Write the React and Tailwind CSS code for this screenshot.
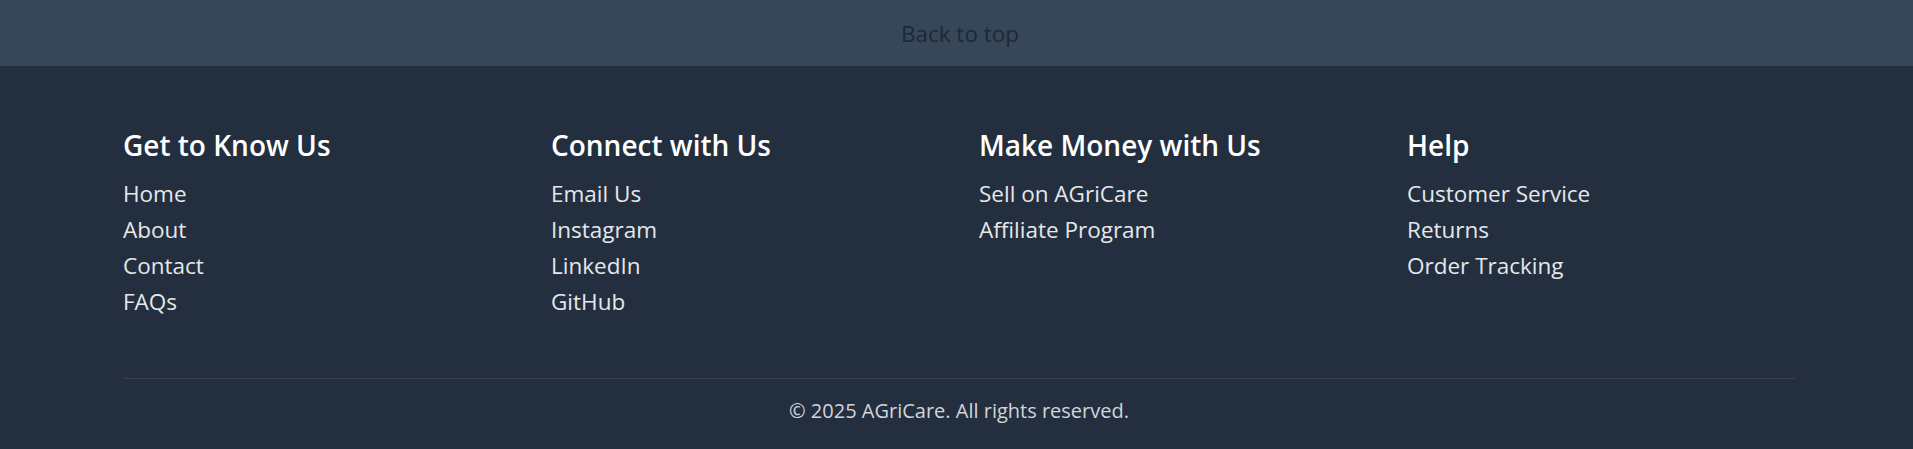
export default function App() {
  const cols = [
    { title: "Get to Know Us", links: ["Home", "About", "Contact", "FAQs"] },
    { title: "Connect with Us", links: ["Email Us", "Instagram", "LinkedIn", "GitHub"] },
    { title: "Make Money with Us", links: ["Sell on AGriCare", "Affiliate Program"] },
    { title: "Help", links: ["Customer Service", "Returns", "Order Tracking"] },
  ];
  return (
    <div className="w-full" style={{ fontFamily: '"Open Sans", "Noto Sans", sans-serif' }}>
      <div className="h-[66px] bg-[#37475a] flex items-center justify-center pl-[7px] pt-[2px]">
        <span className="text-[22.5px] leading-[36px] text-[#1f2733]">Back to top</span>
      </div>
      <footer className="bg-[#232f3e] pl-[123px] pr-[118px] pt-[61px] pb-[23px]">
        <div className="grid grid-cols-4 gap-10">
          {cols.map((c) => (
            <div key={c.title}>
              <h3 className="text-[28px] leading-[36px] font-semibold text-white mb-[13px]">{c.title}</h3>
              <ul>
                {c.links.map((l) => (
                  <li key={l} className="text-[22.5px] leading-[36px] text-[#e5e7eb]">{l}</li>
                ))}
              </ul>
            </div>
          ))}
        </div>
        <div className="mt-[58px] border-t border-[#374151] pt-[17px] text-center text-[20px] leading-[30px] text-[#d1d5db]">
          © 2025 AGriCare. All rights reserved.
        </div>
      </footer>
    </div>
  );
}
